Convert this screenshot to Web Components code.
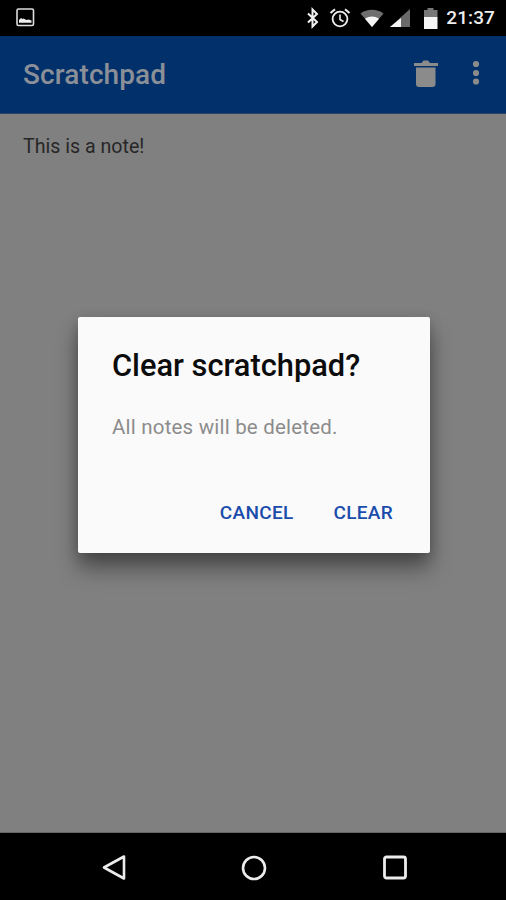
<!DOCTYPE html>
<html><head><meta charset="utf-8">
<style>
html,body{margin:0;padding:0;background:#000}
body{width:506px;height:900px;overflow:hidden;font-family:Roboto,"Liberation Sans",sans-serif}
</style></head>
<body>
<phone-screen>
  <status-bar slot="status"></status-bar>
  <app-bar slot="bar" title="Scratchpad"></app-bar>
  <note-body slot="main">This is a note!</note-body>
  <nav-bar slot="nav"></nav-bar>
  <clear-dialog slot="over" heading="Clear scratchpad?" message="All notes will be deleted."></clear-dialog>
</phone-screen>
<script>
function def(name,html,init){
  customElements.define(name,class extends HTMLElement{
    constructor(){super();this.attachShadow({mode:'open'}).innerHTML=html;}
    connectedCallback(){init&&init(this,this.shadowRoot);}
  });
}
def('phone-screen',`<style>
:host{display:flex;flex-direction:column;width:506px;height:900px;position:relative;overflow:hidden}
.main{flex:1;display:flex;min-height:0}
</style><slot name="status"></slot><slot name="bar"></slot><div class="main"><slot name="main"></slot></div><slot name="nav"></slot><slot name="over"></slot>`);

def('status-bar',`<style>
:host{display:flex;align-items:center;height:36px;background:#000;color:#f0f0f0;flex:none;padding:0 11px 0 16px;box-sizing:border-box}
svg{display:block;flex:none}
.sp{flex:1}
.t{font:500 19px/36px Roboto,"Liberation Sans",sans-serif;color:#eee;margin-left:8px;white-space:nowrap;letter-spacing:.1px}
</style>
<svg width="19" height="19" viewBox="0 0 19 19" style="margin-top:-1px"><rect x="1" y="1" width="16.500" height="16.500" rx="1.500" fill="none" stroke="#ddd" stroke-width="1.600"/><path d="M3 14v-2l2-2 1.500 1 1-.6 3 1.700 2-.6 3 1V14.800H3z" fill="#eee"/></svg>
<span class="sp"></span>
<svg width="14" height="22" viewBox="0 0 14 22" style="margin-right:9px"><path d="M2 6.500 11 15l-4.500 4.500V2.500L11 7 2 15.500" fill="none" stroke="#f2f2f2" stroke-width="2"/></svg>
<svg width="22" height="22" viewBox="0 0 22 22" style="margin-right:9px"><circle cx="11" cy="12" r="7.400" fill="none" stroke="#eee" stroke-width="1.800"/><path d="M11 7.500V12.500L14.500 14.500" fill="none" stroke="#eee" stroke-width="1.600"/><path d="M1.500 6 6 2.200M20.500 6 16 2.200" stroke="#eee" stroke-width="2"/></svg>
<svg width="24" height="20" viewBox="0 0 24 20" style="margin-right:5px"><path d="M0.500 5.500C7 .5 17 .5 23.500 5.500L12 19z" fill="#6e6e6e"/><path d="M5 10.800C9.500 7.800 14.500 7.800 19 10.800L12 19z" fill="#f4f4f4"/></svg>
<svg width="22" height="20" viewBox="0 0 22 20" style="margin-right:12px"><path d="M21 1V19H1z" fill="#6a6a6a"/><path d="M12 10V19H1L12 10z" fill="#f4f4f4"/></svg>
<svg width="15" height="21" viewBox="0 0 15 21"><rect x="4.500" y="0" width="6" height="2" fill="#777"/><rect x="1" y="2" width="13.500" height="7" fill="#777"/><rect x="1" y="9" width="13.500" height="12" fill="#f5f5f5"/></svg>
<span class="t">21:37</span>`);

def('app-bar',`<style>
:host{display:flex;align-items:center;height:78px;background:#01306a;flex:none;padding:0 0 0 23px;box-sizing:border-box;box-shadow:inset 0 -1px 0 #2a4468}
h1{margin:0;font:500 28px/1 Roboto,"Liberation Sans",sans-serif;color:#8a8f98;flex:1;letter-spacing:.1px}
svg{display:block;flex:none}
</style><h1></h1>
<svg width="26" height="30" viewBox="0 0 26 30" style="margin-right:33px;margin-top:-5px"><path d="M3 9.500H22.500V26a3 3 0 0 1-3 3H6a3 3 0 0 1-3-3z" fill="#8b8b8b"/><path d="M1 5H8.500L10.500 2.500H15L17 5H25V8H1z" fill="#8b8b8b"/></svg>
<svg width="8" height="26" viewBox="0 0 8 26" style="margin-right:26px;margin-top:-4px"><circle cx="4" cy="4" r="3.100" fill="#8b8b8b"/><circle cx="4" cy="13" r="3.100" fill="#8b8b8b"/><circle cx="4" cy="21.500" r="3.100" fill="#8b8b8b"/></svg>`,
(h,s)=>{s.querySelector('h1').textContent=h.getAttribute('title')});

def('note-body',`<style>
:host{display:block;flex:1;background:#808080;color:#272727;padding:21px 23px;font:400 19.600px/24px Roboto,"Liberation Sans",sans-serif;box-sizing:border-box}
</style><slot></slot>`);

def('nav-bar',`<style>
:host{display:flex;justify-content:center;align-items:center;height:67px;background:#000;flex:none;box-shadow:0 -1px 0 #666;padding-left:1px;box-sizing:border-box}
div{width:140px;display:flex;justify-content:center}
svg{display:block;width:30px;height:30px}
</style>
<div><svg viewBox="0 0 30 30"><path d="M25 4.500V26.500L5 15.500z" fill="none" stroke="#ececec" stroke-width="2.600" stroke-linejoin="round"/></svg></div>
<div><svg viewBox="0 0 30 30"><circle cx="15" cy="16" r="11" fill="none" stroke="#ececec" stroke-width="2.600"/></svg></div>
<div><svg viewBox="0 0 30 30"><rect x="5.500" y="5" width="21" height="21" rx="2" fill="none" stroke="#ececec" stroke-width="2.800"/></svg></div>`);

def('clear-dialog',`<style>
:host{position:absolute;left:78px;top:317px;width:352px;height:236px;box-sizing:border-box;background:#fafafa;border-radius:2px;padding:31px 37px 0 34px;display:flex;flex-direction:column;box-shadow:0 16px 22px rgba(0,0,0,.38),0 4px 14px rgba(0,0,0,.2);color:#000}
h2{margin:0;font:500 30.800px/36px Roboto,"Liberation Sans",sans-serif;color:#0c0c0c;white-space:nowrap}
p{margin:31px 0 0;font:400 20.500px/24px Roboto,"Liberation Sans",sans-serif;letter-spacing:.2px;color:#8c8c8c;white-space:nowrap}
.a{display:flex;justify-content:flex-end;gap:40px;margin-top:62px}
span{font:500 19px/24px Roboto,"Liberation Sans",sans-serif;color:#1a4cac;letter-spacing:.3px;text-transform:uppercase}
</style><h2></h2><p></p><div class="a"><span>Cancel</span><span>Clear</span></div>`,
(h,s)=>{s.querySelector('h2').textContent=h.getAttribute('heading');s.querySelector('p').textContent=h.getAttribute('message')});
</script>
</body></html>
